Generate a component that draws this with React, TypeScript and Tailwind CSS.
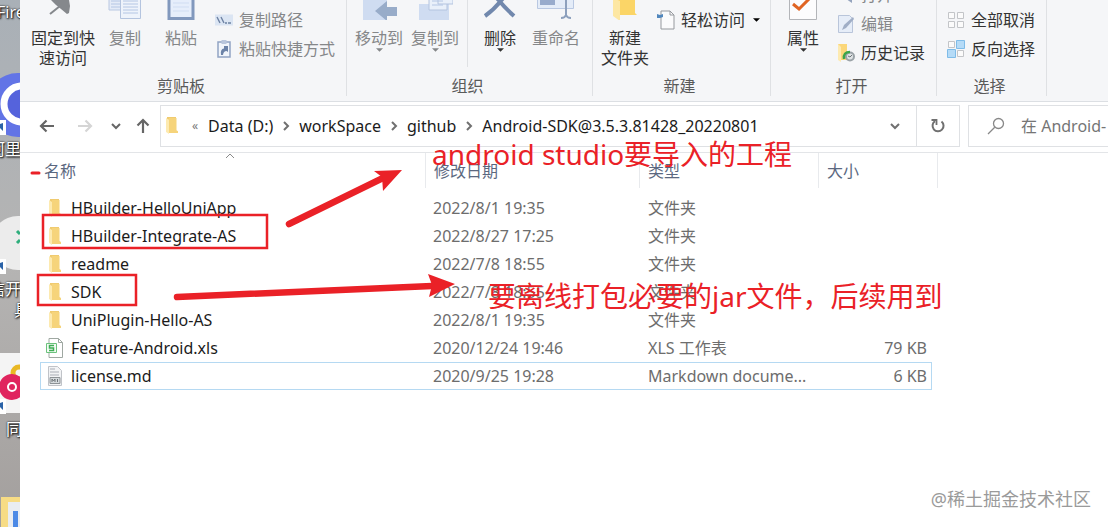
import { ReactNode } from "react";
import clsx from "clsx";

const Folder = ({ className = "w-3 h-[18px]" }: { className?: string }) => (
    <svg viewBox="0 0 12 18" preserveAspectRatio="none" className={clsx("shrink-0", className)}>
        <path fill="#f0cb70" d="M1 0h9v14l-4 2H1z" />
        <path fill="#fdeab0" d="M0 1l3 2v15l-3-2z" />
        <path fill="#f6d47b" d="M3 1h7.500v13l1.500 1v2H3z" />
    </svg>
);

const Chevron = ({ className }: { className?: string }) => (
    <svg viewBox="0 0 10 10" className={clsx("w-[10px] h-[10px] shrink-0", className)}>
        <path d="M1 3l4 4 4-4" fill="none" stroke="currentColor" strokeWidth="2" />
    </svg>
);

const Caret = ({ className }: { className?: string }) => (
    <svg viewBox="0 0 8 4" className={clsx("w-[7px] h-1 shrink-0", className)}>
        <path d="M0 0h8L4 4z" fill="currentColor" />
    </svg>
);

const PinIcon = () => (
    <svg viewBox="0 0 32 20" className="w-8 h-5">
        <path d="M4 0h18l1 6-1 7-2 1-6-5-5-4z" fill="#85888c" />
        <path d="M13 6L3 14" stroke="#85888c" strokeWidth="2" fill="none" />
    </svg>
);

const CopyIcon = () => (
    <svg viewBox="0 0 34 20" className="w-[34px] h-5">
        <path d="M1 -2h20v12H1z" fill="#e4ebf7" stroke="#b9c8e2" />
        <path d="M3 1h9M3 4h9M3 7h9" stroke="#b4c6e4" />
        <path d="M12.500 -2h20v20.500h-20z" fill="#eef3fb" stroke="#b4c4df" />
        <path d="M15 1h15M15 4h15M15 7h15M15 10h15M15 13h15" stroke="#b4c6e4" />
    </svg>
);

const PasteIcon = () => (
    <svg viewBox="0 0 28 20" className="w-7 h-5">
        <path d="M2 -2h24v20.500H2z" fill="#e6eefb" stroke="#8198bd" strokeWidth="3" />
        <path d="M6 3h16M6 7h16M6 11h16" stroke="#d0ddf2" />
    </svg>
);

const MoveIcon = () => (
    <svg viewBox="0 0 36 20" className="w-9 h-5">
        <path d="M2 -1h24v21H2z" fill="#cfdcf1" />
        <path d="M14 11L26 1v6h11v9H26v5z" fill="#98acc9" />
    </svg>
);

const CopyToIcon = () => (
    <svg viewBox="0 0 36 20" className="w-9 h-5">
        <path d="M2 4h30v16H2z" fill="#cfdcf1" />
        <path d="M12 -2h18v12H12z" fill="#e9f0fa" stroke="#b4c4df" />
        <path d="M21 -3h15v7H21z" fill="#e9f0fa" stroke="#b4c4df" />
        <path d="M15 1h11M15 5h11" stroke="#b4c6e4" />
    </svg>
);

const DeleteIcon = () => (
    <svg viewBox="0 0 34 20" className="w-[34px] h-5">
        <path d="M2 16Q12 9 21 -3M31 16Q21 7 13 -3" stroke="#7188ad" strokeWidth="4" fill="none" />
    </svg>
);

const RenameIcon = () => (
    <svg viewBox="0 0 38 20" className="w-[38px] h-5">
        <path d="M.5 -2h36v10.500H.5z" fill="#e4ecf8" stroke="#b9c8e2" />
        <path d="M3 -2h15v7H3z" fill="#98abcc" />
        <path d="M29 -2v18M24 18q4 0 5-3 1 3 5 3" fill="none" stroke="#8da0bd" strokeWidth="2" />
    </svg>
);

const NewFolderIcon = () => (
    <svg viewBox="0 0 28 20" className="w-7 h-5">
        <path d="M2 -2h22v15l2 2H8z" fill="#fbd567" />
        <path d="M2 -2l7 3v20l-7-5z" fill="#fde7a3" />
    </svg>
);

const PropertiesIcon = () => (
    <svg viewBox="0 0 28 20" className="w-7 h-5">
        <path d="M.5 -2h27v21.500H.5z" fill="#fcfcfd" stroke="#b3b5b9" />
        <path d="M4 4l6 5L22 -3" fill="none" stroke="#e06423" strokeWidth="3" />
    </svg>
);

const PathIcon = () => (
    <svg viewBox="0 0 18 18" className="w-[18px] h-[18px]">
        <path d="M0 3.500h18v11H0z" fill="#dbe5f3" />
        <path d="M2 6l3 6M6 6l3 6M10 12h2M13 12h3" stroke="#6e82a3" strokeWidth="1.400" fill="none" />
    </svg>
);

const ShortcutIcon = () => (
    <svg viewBox="0 0 18 18" className="w-[18px] h-[18px]">
        <path d="M3 2h12v15H3z" fill="#f1f5fb" stroke="#91a4c4" strokeWidth="1.500" />
        <path d="M6.500 0h5v4h-5z" fill="#b9c6dc" />
        <path d="M6 15q-1-6 3-6.500V6h4v6l-1.500-1q-3 0-3.500 4z" fill="#6c83a8" />
    </svg>
);

const EasyAccessIcon = () => (
    <svg viewBox="0 0 18 20" className="w-[18px] h-5">
        <path d="M4 1h9l4 4v14H4z" fill="#fbfbfc" stroke="#96999e" />
        <path d="M13 1v4h4" fill="none" stroke="#96999e" />
        <path d="M0 8V4l3 1 3-1v3l-3 1z" fill="#5187bd" />
    </svg>
);

const OpenIcon = () => (
    <svg viewBox="0 0 18 18" className="w-[18px] h-[18px]">
        <path d="M1 6h14v8H1z" fill="#b7c1d3" />
        <path d="M8 12h7v5l-3-2z" fill="#94a3bd" />
    </svg>
);

const EditIcon = () => (
    <svg viewBox="0 0 18 18" className="w-[18px] h-[18px]">
        <path d="M1.500 .5h11l3 3v14h-14z" fill="#e6edf8" stroke="#b9c5da" />
        <path d="M5 15l2-5 9-8 1 2-8 9z" fill="#a0aec6" />
    </svg>
);

const HistoryIcon = () => (
    <svg viewBox="0 0 18 18" className="w-[18px] h-[18px]">
        <path d="M1 0h9v16H1z" fill="#fbd77a" />
        <path d="M1 0l3 3v15l-3-2z" fill="#fdeab1" />
        <circle cx="13" cy="12.500" r="4" fill="#dfe3e5" stroke="#9ba3a8" strokeWidth="2" />
        <path d="M7 15q-1-7 6-7" fill="none" stroke="#3aa54a" strokeWidth="2.500" />
        <path d="M11 12l2 1 2-2" fill="none" stroke="#6d7579" />
    </svg>
);

const SelectNoneIcon = () => (
    <svg viewBox="0 0 18 18" className="w-[18px] h-[18px]">
        <path d="M1.500 1.500h6v6h-6zM10.500 1.500h6v6h-6zM1.500 10.500h6v6h-6zM10.500 10.500h6v6h-6z" fill="#fbfbfb" stroke="#c3c5c8" />
    </svg>
);

const InvertIcon = () => (
    <svg viewBox="0 0 18 18" className="w-[18px] h-[18px]">
        <path d="M1.500 1.500h6v6h-6zM10.500 10.500h6v6h-6z" fill="#fbfbfb" stroke="#c3c5c8" />
        <path d="M9.500 .5h8v8h-8zM.5 9.500h8v8h-8z" fill="#b5dbf7" stroke="#7fbce8" />
    </svg>
);

const XlsIcon = () => (
    <svg viewBox="0 0 18 20" className="w-[18px] h-5">
        <path d="M3 .5h9.500l4 4v15H3z" fill="#fff" stroke="#9fa8a2" />
        <path d="M12.500 .5v4h4" fill="none" stroke="#9fa8a2" />
        <path d="M.5 5.500h10v9H.5z" fill="#f3fbf4" stroke="#6cc27c" />
        <path d="M8 7.500H3.500V10h4v2.500H3" fill="none" stroke="#3fae55" strokeWidth="1.500" />
    </svg>
);

const MdIcon = () => (
    <svg viewBox="0 0 16 20" className="w-4 h-5">
        <path d="M1.500 .5h9l4 4v15h-13z" fill="#f2f3f5" stroke="#c0c3c8" />
        <path d="M3 3h5M3 6h9M3 9h9" stroke="#a9adb5" />
        <path d="M3 11.500h10v6H3z" fill="#d5dadd" stroke="#8d9296" />
        <path d="M5 16v-3l1.500 2L8 13v3M10.500 13v3" fill="none" stroke="#6f7478" />
    </svg>
);

const BigButton = ({ icon, label, className, muted, caret }: { icon: ReactNode, label: string[], className: string, muted?: boolean, caret?: boolean }) => (
    <button className={clsx("flex flex-col items-center shrink-0 whitespace-nowrap leading-5", className, muted ? "text-[#858789]" : "text-[#333]")}>
        <span className="h-7">{icon}</span>
        {label.map((line) => <span key={line}>{line}</span>)}
        {caret && <Caret />}
    </button>
);

const SmallButton = ({ icon, label, muted, caret }: { icon: ReactNode, label: string, muted?: boolean, caret?: boolean }) => (
    <button className={clsx("flex items-center gap-[6px] h-[29px] whitespace-nowrap", muted ? "text-[#858789]" : "text-[#333]")}>
        {icon}
        <span>{label}</span>
        {caret && <Caret className="text-black ml-[2px]" />}
    </button>
);

const Group = ({ label, className, children }: { label: string, className: string, children: ReactNode }) => (
    <section className={clsx("flex flex-col shrink-0 border-r border-[#dfe1e4] mb-[5px]", className)}>
        <div className="flex items-start h-[77px]">{children}</div>
        <h2 className="text-center text-[#5a5a5a] leading-5 pr-1">{label}</h2>
    </section>
);

const path = ["Data (D:)", "workSpace", "github", "Android-SDK@3.5.3.81428_20220801"];

const files = [
    { name: "HBuilder-HelloUniApp", date: "2022/8/1 19:35", type: "文件夹", size: "" },
    { name: "HBuilder-Integrate-AS", date: "2022/8/27 17:25", type: "文件夹", size: "" },
    { name: "readme", date: "2022/7/8 18:55", type: "文件夹", size: "" },
    { name: "SDK", date: "2022/7/8 18:55", type: "文件夹", size: "" },
    { name: "UniPlugin-Hello-AS", date: "2022/8/1 19:35", type: "文件夹", size: "" },
    { name: "Feature-Android.xls", date: "2020/12/24 19:46", type: "XLS 工作表", size: "79 KB" },
    { name: "license.md", date: "2020/9/25 19:28", type: "Markdown docume...", size: "6 KB" },
];

const FileIcon = ({ name }: { name: string }) => {
    if (name.endsWith(".xls")) return <XlsIcon />;
    if (name.endsWith(".md")) return <MdIcon />;
    return <Folder />;
};

const Desktop = () => (
    <aside className="relative w-5 shrink-0 overflow-hidden bg-linear-to-b from-[#a9b0b7] via-[#b5b4b3] to-[#a39f9d] text-white whitespace-nowrap [text-shadow:0_0_2px_#000,1px_1px_2px_#000]">
        <svg viewBox="0 0 20 527" className="absolute left-0 top-0 w-5 h-[527px]">
            <circle cx="18" cy="105" r="32" fill="#6274e6" />
            <circle cx="22" cy="104" r="18" fill="#5563dc" stroke="#fff" strokeWidth="7" />
            <circle cx="18" cy="243" r="27" fill="#ececec" />
            <path d="M17 231l3 3M17 243l3-3" stroke="#2fae7c" strokeWidth="3" />
            <path d="M0 353h20v60H0z" fill="#f4f4f4" />
            <circle cx="19" cy="373" r="6" fill="none" stroke="#e9b824" strokeWidth="5" />
            <circle cx="12" cy="387" r="9" fill="#fff" stroke="#e0245e" strokeWidth="8" />
            <circle cx="12" cy="387" r="3" fill="#e0245e" />
            <path d="M0 120h6v15H0zM0 259h6v15H0zM0 399h6v15H0z" fill="#fff" />
            <path d="M0 124l3-1v8l-3-3zM0 263l3-1v8l-3-3zM0 403l3-1v8l-3-3z" fill="#2b63a8" />
            <path d="M1 497h19v30H1z" fill="#f7dc85" />
            <path d="M8 502h12v25H8z" fill="#e9edf2" />
            <path d="M13 511h5v16h-5z" fill="#4c8ae6" />
        </svg>
        <span className="absolute -left-[3px] top-0 leading-6">Fire</span>
        <span className="absolute -left-[11px] top-[137px] leading-6">阿里</span>
        <span className="absolute -left-[11px] top-[277px] leading-6">信开</span>
        <span className="absolute left-[14px] top-[298px] leading-6">具</span>
        <span className="absolute left-[6px] top-[417px] leading-6">同</span>
    </aside>
);

const Ribbon = () => (
    <header className="flex h-[102px] bg-[#f5f6f8] border-b border-[#dcdfe3] overflow-hidden">
        <Group label="剪贴板" className="w-[327px]">
            <BigButton icon={<PinIcon />} label={["固定到快", "速访问"]} className="w-16 ml-[11px]" />
            <BigButton icon={<CopyIcon />} label={["复制"]} className="w-14 ml-[2px]" muted />
            <BigButton icon={<PasteIcon />} label={["粘贴"]} className="w-14" muted />
            <div className="flex flex-col ml-[6px] pt-[5px]">
                <SmallButton icon={<PathIcon />} label="复制路径" muted />
                <SmallButton icon={<ShortcutIcon />} label="粘贴快捷方式" muted />
            </div>
        </Group>
        <Group label="组织" className="w-[246px]">
            <BigButton icon={<MoveIcon />} label={["移动到"]} className="w-14 ml-1" muted caret />
            <BigButton icon={<CopyToIcon />} label={["复制到"]} className="w-14" muted caret />
            <div className="w-px h-[67px] ml-1 bg-[#dfe1e4]" />
            <BigButton icon={<DeleteIcon />} label={["删除"]} className="w-16" caret />
            <BigButton icon={<RenameIcon />} label={["重命名"]} className="w-12" muted />
        </Group>
        <Group label="新建" className="w-[178px]">
            <BigButton icon={<NewFolderIcon />} label={["新建", "文件夹"]} className="w-16" />
            <div className="flex flex-col pt-[5px]">
                <SmallButton icon={<EasyAccessIcon />} label="轻松访问" caret />
            </div>
        </Group>
        <Group label="打开" className="w-[166px]">
            <BigButton icon={<PropertiesIcon />} label={["属性"]} className="w-16" caret />
            <div className="flex flex-col ml-[2px] -mt-5">
                <SmallButton icon={<OpenIcon />} label="打开" muted />
                <SmallButton icon={<EditIcon />} label="编辑" muted />
                <SmallButton icon={<HistoryIcon />} label="历史记录" />
            </div>
        </Group>
        <Group label="选择" className="w-[110px]">
            <div className="flex flex-col pt-[5px] ml-[10px]">
                <SmallButton icon={<SelectNoneIcon />} label="全部取消" />
                <SmallButton icon={<InvertIcon />} label="反向选择" />
            </div>
        </Group>
    </header>
);

const Arrow = ({ className }: { className?: string }) => (
    <svg viewBox="0 0 16 16" className={clsx("w-4 h-4", className)}>
        <path d="M15 8H2M7.500 2.500L2 8l5.500 5.500" fill="none" stroke="currentColor" strokeWidth="2.200" />
    </svg>
);

const AddressBar = () => (
    <div className="flex items-center h-[51px] pb-[3px] border-b border-[#e3e5e8]">
        <nav className="flex items-center justify-between w-[140px] pl-[19px] pr-[9px] shrink-0 text-[#666]">
            <button aria-label="后退"><Arrow /></button>
            <button aria-label="前进" className="ml-2"><Arrow className="rotate-180 text-[#d5d5d5]" /></button>
            <button aria-label="最近"><Chevron className="w-[9px] ml-1" /></button>
            <button aria-label="上移"><Arrow className="rotate-90" /></button>
        </nav>
        <div className="flex items-center flex-1 min-w-0 h-[42px] border border-[#dfe1e4]">
            <Folder className="w-3 h-[17px] ml-[5px]" />
            <span className="text-[#777] text-xs ml-[14px] mr-[10px]">«</span>
            <ol className="flex items-center flex-1 min-w-0 text-[#1b1b1b] whitespace-nowrap">
                {path.map((dir, i) => (
                    <li key={dir} className="flex items-center">
                        {i > 0 && <Chevron className="-rotate-90 mx-2 text-[#707070]" />}
                        <button>{dir}</button>
                    </li>
                ))}
            </ol>
            <button aria-label="展开" className="w-[42px] h-full flex items-center justify-center text-[#707070]"><Chevron className="w-3 h-3" /></button>
            <button aria-label="刷新" className="w-[43px] h-full flex items-center justify-center border-l border-[#dfe1e4] text-[#707070]">
                <svg viewBox="0 0 16 16" className="w-4 h-4">
                    <path d="M5 3.200a5.500 5.500 0 1 0 6.500 .3" fill="none" stroke="currentColor" strokeWidth="2" />
                    <path d="M1.500 2h5v5" fill="none" stroke="currentColor" strokeWidth="1.800" />
                </svg>
            </button>
        </div>
        <label className="flex items-center w-[140px] h-[42px] ml-2 pl-[18px] gap-4 shrink-0 border border-r-0 border-[#dfe1e4]">
            <svg viewBox="0 0 18 18" className="w-[18px] h-[18px] shrink-0">
                <path d="M7.500 10.500L1 17M16.500 6.500a5 5 0 1 1-10 0 5 5 0 0 1 10 0z" fill="none" stroke="#888" strokeWidth="1.300" />
            </svg>
            <input type="text" aria-label="搜索" placeholder="在 Android-" className="w-24 shrink-0 outline-none placeholder:text-[#757575]" />
        </label>
    </div>
);

const FileTable = () => (
    <div className="flex-1 pl-5">
        <table className="table-fixed border-separate border-spacing-0 w-[892px] text-[#6d6d6d] whitespace-nowrap">
            <colgroup>
                <col className="w-[385px]" />
                <col className="w-[214px]" />
                <col className="w-[179px]" />
                <col />
            </colgroup>
            <thead>
                <tr className="h-[41px] align-top text-left text-[#5b6880]">
                    {["名称", "修改日期", "类型", "大小"].map((title, i) => (
                        <th key={title} className="relative p-0 font-normal">
                            <div className={clsx("flex items-center h-[35px]", i === 0 ? "pl-1" : "pl-2 border-l border-[#e8eaed]", i === 3 && "border-r -mr-[6px]")}>{title}</div>
                            {i === 0 && (
                                <svg viewBox="0 0 10 6" className="absolute left-[185px] top-0 w-[10px] h-[6px]">
                                    <path d="M1 5l4-4 4 4" fill="none" stroke="#8a8a8a" />
                                </svg>
                            )}
                        </th>
                    ))}
                </tr>
            </thead>
            <tbody>
                {files.map((file) => (
                    <tr key={file.name} className={clsx("h-7 *:p-0 *:border-y *:first:border-l *:last:border-r", file.name === "license.md" ? "*:border-[#b5d9f2]" : "*:border-transparent")}>
                        <td>
                            <div className="flex items-center text-[#1b1b1b] leading-5">
                                <span className="flex justify-center w-7 mr-[2px]"><FileIcon name={file.name} /></span>
                                {file.name}
                            </div>
                        </td>
                        <td><div className="pl-2 leading-5">{file.date}</div></td>
                        <td><div className="pl-[9px] leading-5">{file.type}</div></td>
                        <td><div className="pr-1 text-right leading-5">{file.size}</div></td>
                    </tr>
                ))}
            </tbody>
        </table>
    </div>
);

// Red pen marks drawn over the window
const Annotations = () => (
    <div className="absolute inset-0 pointer-events-none text-[#ea2127] text-[28px] leading-8 whitespace-nowrap">
        <svg viewBox="0 0 1108 527" className="absolute left-0 top-0 w-[1108px] h-[527px]">
            <g fill="none" stroke="#ea2127" strokeWidth="2.500">
                <path d="M43 215h224v33H43z" />
                <path d="M38 275h98v30H38z" />
                <path d="M32 173h7" strokeWidth="3" strokeLinecap="round" />
                <path d="M289 224L385 177M177 297L432 286" strokeWidth="6.500" strokeLinecap="round" />
            </g>
            <path fill="#ea2127" d="M402 170l-28 1 8 6 1 14zM455 284l-27-10 4 11-3 12z" />
        </svg>
        <p className="absolute left-[432px] top-[138px]">android studio要导入的工程</p>
        <p className="absolute left-[488px] top-[280px]">要离线打包必要的jar文件，后续用到</p>
    </div>
);

export default function App() {
    return (
        <div className="relative flex min-h-screen overflow-hidden bg-white text-base font-['Noto_Sans','Noto_Sans_CJK_SC',sans-serif]">
            <Desktop />
            <main className="flex flex-col flex-1 min-w-0">
                <Ribbon />
                <AddressBar />
                <FileTable />
            </main>
            <Annotations />
            <p className="absolute right-[17px] bottom-4 text-lg leading-6 text-[#9a9a9a]">@稀土掘金技术社区</p>
        </div>
    );
}
